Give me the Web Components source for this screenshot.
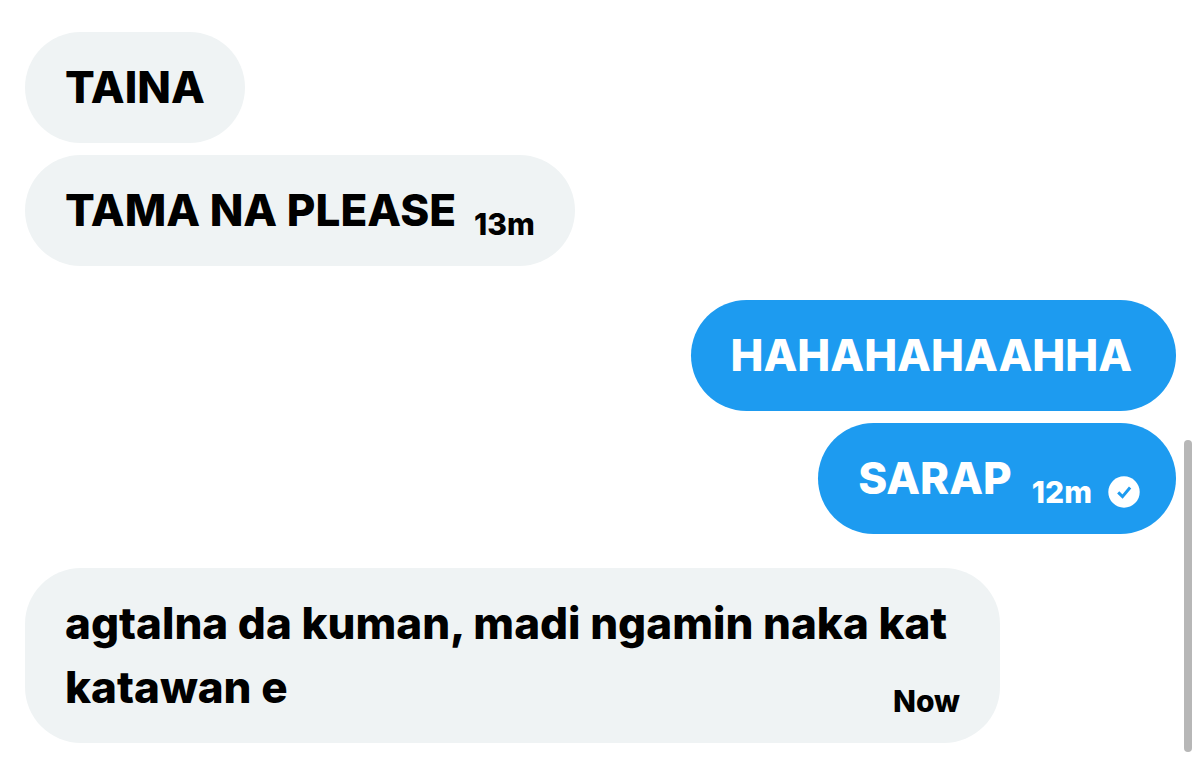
<!DOCTYPE html>
<html lang="ilo">
<head>
<meta charset="utf-8">
<meta name="viewport" content="width=device-width, initial-scale=1">
<title>Messages</title>
<style>
body { margin: 0; background: #fff; }
</style>
</head>
<body>
<chat-thread>
  <message-group>
    <chat-bubble>TAINA</chat-bubble>
    <chat-bubble time="13m">TAMA NA PLEASE</chat-bubble>
  </message-group>
  <message-group sent>
    <chat-bubble sent>HAHAHAHAAHHA</chat-bubble>
    <chat-bubble sent seen time="12m">SARAP<read-receipt slot="status"></read-receipt></chat-bubble>
  </message-group>
  <message-group>
    <chat-bubble time="Now" long>agtalna da kuman, madi ngamin naka kat <span>katawan e</span></chat-bubble>
  </message-group>
</chat-thread>
<script>
const define = (name, html) => customElements.define(name, class extends HTMLElement {
  constructor() {
    super();
    this.attachShadow({ mode: 'open' }).innerHTML = html;
  }
  connectedCallback() {
    const time = this.shadowRoot.querySelector('time');
    if (!time) return;
    time.textContent = this.getAttribute('time') || '';
    time.hidden = !this.hasAttribute('time');
  }
});

define('chat-thread', `
<style>
:host { display: grid; grid-template-columns: 1fr 8px; box-sizing: border-box; min-height: 100vh; padding: 32px 8px 25px 25px; column-gap: 8px; font-family: Inter, "Liberation Sans", sans-serif; font-weight: 800; }
main { display: flex; flex-direction: column; gap: 34px; min-width: 0; }
.bar { align-self: end; height: 312px; border-radius: 4px; background: #b7b7b7; }
</style>
<main><slot></slot></main><div class="bar"></div>`);

define('message-group', `
<style>
:host { display: flex; flex-direction: column; align-items: flex-start; gap: 12px; }
:host([sent]) { align-items: flex-end; }
</style>
<slot></slot>`);

define('chat-bubble', `
<style>
:host { display: flex; align-items: flex-end; box-sizing: border-box; max-width: calc(100% - 176px); padding: 23px 40px 24px; border-radius: 56px; background: #eff3f4; color: #000; font-size: 44px; line-height: 64px; }
:host([sent]) { padding-right: 44px; background: #1d9bf0; color: #fff; }
:host([seen]) { padding-right: 36px; }
time { flex: none; margin-left: 18px; font-size: 30px; line-height: 36px; }
:host([seen]) time { margin-left: 20px; }
time[hidden] { display: none; }
/* Long messages keep their full width; the time shares the last line. */
:host([long]) { display: flow-root; }
:host([long]) time { float: right; margin-top: 28px; }
</style>
<span><slot></slot></span><time></time><slot name="status"></slot>`);

define('read-receipt', `
<style>
:host { display: block; flex: none; width: 32px; height: 32px; margin: 0 0 2px 16px; }
svg { display: block; }
</style>
<svg width="32" height="32" viewBox="0 0 32 32" role="img" aria-label="Seen"><circle cx="16" cy="16" r="15.7" fill="#fff"/><path d="M10.2 16.4l4.3 4.2 7.6-9.1" fill="none" stroke="#1d9bf0" stroke-width="3"/></svg>`);
</script>
</body>
</html>
